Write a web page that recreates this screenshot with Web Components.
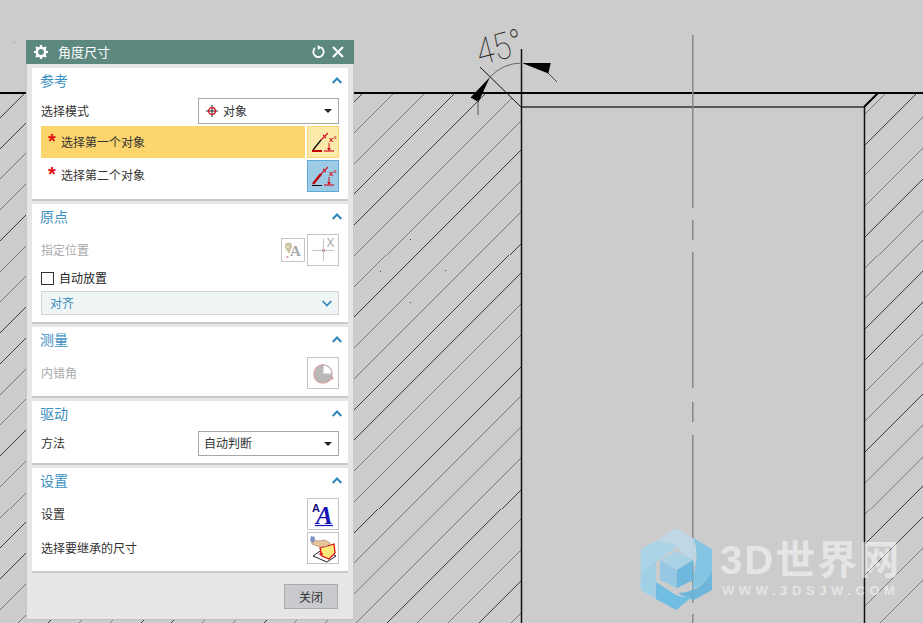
<!DOCTYPE html>
<html>
<head>
<meta charset="utf-8">
<style>
  html, body { margin: 0; height: 100%; background: #cccccc; overflow: hidden; }
  body { font-family: "Noto Sans CJK SC", "Liberation Sans", sans-serif; font-size: 12px; color: #333; }
</style>
</head>
<body>
<cad-drawing></cad-drawing>
<site-watermark></site-watermark>
<ug-dialog heading="角度尺寸">
  <ug-panel heading="参考">
    <ug-row label="选择模式"><ug-select><svg slot="icon" width="12" height="12" viewBox="0 0 12 12"><path d="M6 0v12M0 6h12" stroke="#222" stroke-width="1"/><circle cx="6" cy="6" r="3.4" fill="none" stroke="#d01020" stroke-width="1.3"/></svg>对象</ug-select></ug-row>
    <ug-row label="选择第一个对象" required state="active"><ug-tool state="active"><svg width="30" height="30" viewBox="0 0 30 30"><path d="M5 23L13 13" stroke="#111" stroke-width="1.4"/><path d="M4 24h10" stroke="#c00000" stroke-width="2"/><path d="M13 13l7-7M15 8l3 3" stroke="#d01020" stroke-width="1.1" fill="none"/><path d="M21 16v7" stroke="#d01020"/><path d="M19 21h4l-2 3z" fill="#d01020"/><path d="M16 24h10" stroke="#d01020" stroke-width="1.2"/><text x="21" y="15" font-size="8" font-weight="700" fill="#d01020" font-family="Liberation Sans">x°</text></svg></ug-tool></ug-row>
    <ug-row label="选择第二个对象" required><ug-tool state="focus"><svg width="30" height="30" viewBox="0 0 30 30"><path d="M5 23L13 13" stroke="#c00000" stroke-width="2.4"/><path d="M4 24.500h10" stroke="#111" stroke-width="1"/><path d="M13 13l7-7M15 8l3 3" stroke="#d01020" stroke-width="1.1" fill="none"/><path d="M21 16v7" stroke="#d01020"/><path d="M19 21h4l-2 3z" fill="#d01020"/><path d="M16 24h10" stroke="#d01020" stroke-width="1.2"/><text x="21" y="15" font-size="8" font-weight="700" fill="#d01020" font-family="Liberation Sans">x°</text></svg></ug-tool></ug-row>
  </ug-panel>
  <ug-panel heading="原点">
    <ug-row label="指定位置" disabled>
      <ug-tool size="small"><svg width="22" height="22" viewBox="0 0 22 22"><circle cx="6.5" cy="7" r="3.6" fill="#c9c3a4"/><path d="M4 10l3 5 2-5z" fill="#c9c3a4"/><circle cx="6" cy="8" r="1.4" fill="#e8e4cf"/><rect x="4.5" y="17" width="2" height="2" fill="#d9a0a8"/><text x="8" y="17" font-size="15" font-weight="700" fill="#a9a9a9" font-family="Liberation Serif">A</text></svg></ug-tool>
      <ug-tool><svg width="30" height="30" viewBox="0 0 30 30"><path d="M4 15.500h22M15.500 4v22" stroke="#c4c4c4" fill="none"/><rect x="14" y="14" width="3" height="3" fill="#cfa6aa"/><rect x="17" y="2" width="12" height="11" fill="#fff"/><text x="18.500" y="12" font-size="12" fill="#a8a8a8" font-family="Liberation Sans">X</text></svg></ug-tool>
    </ug-row>
    <ug-check label="自动放置"></ug-check>
    <ug-group label="对齐"></ug-group>
  </ug-panel>
  <ug-panel heading="测量">
    <ug-row label="内错角" disabled><ug-tool><svg width="30" height="30" viewBox="0 0 30 30"><circle cx="15" cy="16" r="9" fill="#b8b8b8" stroke="#cfa9a9" stroke-width="1.6"/><path d="M15 16V7a9 9 0 0 1 9 9z" fill="#fff" stroke="#bbb"/><path d="M13 6l3 1-3 2zM23 22l1-4 2 3z" fill="#cfa0a0"/></svg></ug-tool></ug-row>
  </ug-panel>
  <ug-panel heading="驱动">
    <ug-row label="方法"><ug-select compact>自动判断</ug-select></ug-row>
  </ug-panel>
  <ug-panel heading="设置">
    <ug-row label="设置"><ug-tool><svg width="30" height="30" viewBox="0 0 30 30"><text x="4" y="13" font-size="11" font-weight="700" fill="#1a0f80" font-family="Liberation Sans">A</text><text x="8" y="25" font-size="25" font-weight="700" font-style="italic" fill="#1414b4" font-family="Liberation Serif">A</text><path d="M7 26.500h18" stroke="#1414b4" stroke-width="1.2"/></svg></ug-tool></ug-row>
    <ug-row label="选择要继承的尺寸"><ug-tool><svg width="30" height="30" viewBox="0 0 30 30"><path d="M5 23l10-7 13 7-9 6z" fill="#fff" stroke="#222"/><path d="M12 15l14-4 1 9-6 6-7-3z" fill="#ffe97a" stroke="#d81010" stroke-width="1.300"/><path d="M3 6l7 2 7-1 5 3-3 3-7 1-8-3z" fill="#e8c39a" stroke="#9a8068" stroke-width=".6"/><path d="M3 3l4 1-1 6-4-2z" fill="#7c92c8"/><circle cx="13" cy="21" r="1.700" fill="#e02020"/></svg></ug-tool></ug-row>
  </ug-panel>
  <ug-button slot="footer">关闭</ug-button>
</ug-dialog>

<script>
class CadDrawing extends HTMLElement {
  connectedCallback() {
    const root = this.attachShadow({ mode: 'open' });
    let hatch = '';
    for (let k = -11; k < 35; k++) {
      const c = 456 + 30.75 * k;
      const m = ((k % 7) + 7) % 7;
      const black = (m === 0 || m === 3 || m === 4) && k !== 17;
      const col = black ? '#000' : '#5a5a5a';
      // left block, cut by the chamfer and the wall at x=521
      let x1 = Math.min(c - 93, 521), y1 = c - x1;
      if (x1 > 507) { x1 = (c + 413) / 2; y1 = c - x1; }
      if (c - 93 > 507 && y1 > 107 && x1 >= 521) { x1 = 521; y1 = c - 521; }
      if (x1 > 0 && c > 94) {
        hatch += `<line x1="${x1}" y1="${y1}" x2="${c - 623}" y2="623" stroke="${col}"/>`;
      }
      // right block
      if (c > 957) {
        let rx = Math.min(c - 93, 923), ry = c - rx;
        hatch += `<line x1="${rx}" y1="${ry}" x2="865" y2="${c - 865}" stroke="${col}"/>`;
      }
    }
    root.innerHTML = `
      <style>
        :host { position: absolute; inset: 0; display: block; }
        svg { display: block; }
        text { font-family: Roboto, "Liberation Sans", sans-serif; font-weight: 100; }
      </style>
      <svg width="923" height="623" viewBox="0 0 923 623">
        <g stroke-width=".7" shape-rendering="crispEdges">${hatch}</g>
        <g fill="#444">
          <rect x="410" y="239" width="1" height="1"/><rect x="380" y="271" width="1" height="1"/>
          <rect x="410" y="302" width="1" height="1"/><rect x="445" y="270" width="1" height="1"/>
          <rect x="14" y="42" width="1" height="1" fill="#888"/>
        </g>
        <line x1="0" y1="93" x2="923" y2="93" stroke="#000" stroke-width="2"/>
        <line x1="521" y1="107" x2="864" y2="107" stroke="#333" stroke-width="1.5"/>
        <line x1="521.500" y1="49" x2="521.500" y2="623" stroke="#111" stroke-width="1.500"/>
        <line x1="864.500" y1="107" x2="864.500" y2="623" stroke="#111" stroke-width="1.500"/>
        <line x1="864" y1="107" x2="878" y2="93" stroke="#000" stroke-width="2"/>
        <line x1="480" y1="67" x2="521.500" y2="107.500" stroke="#111"/>
        <path d="M692.800 35V208M692.800 220V240M692.800 252V388M692.800 402V422M692.800 435V603M692.800 614V623" stroke="#888" stroke-width="1.500" fill="none"/>
        <path d="M490 77A44 44 0 0 1 522 63" stroke="#666" fill="none"/>
        <path d="M490 77L470.500 97.500L478.500 102z" fill="#000"/>
        <path d="M478 100V115" stroke="#555"/>
        <path d="M522 63H550.700L548.300 73.500z" fill="#000"/>
        <path d="M548 73L557 82" stroke="#444"/>
        <text transform="translate(480 65.500) rotate(-15) scale(.86 1)" font-size="37" fill="#222">45°</text>
      </svg>`;
  }
}

class SiteWatermark extends HTMLElement {
  connectedCallback() {
    this.attachShadow({ mode: 'open' }).innerHTML = `
      <style>
        :host { position: absolute; left: 640px; top: 528px; display: flex; gap: 8px; pointer-events: none; }
        svg { opacity: .92; }
        .words { display: flex; flex-direction: column; padding-top: 9px; color: rgba(255,255,255,.5); font-family: "Liberation Sans", "Noto Sans CJK SC", sans-serif; font-weight: 700; }
        .big { font-size: 40px; line-height: 46px; letter-spacing: 2px; white-space: nowrap; }
        .small { font-size: 13px; line-height: 16px; letter-spacing: 4.600px; white-space: nowrap; padding-left: 2px; }
      </style>
      <svg width="72" height="83" viewBox="0 0 72 83">
        <path d="M36 0L54 10.500Q58 24 54 37L37 19Q28 13 16 13z" fill="#bfd9e8"/>
        <path d="M.7 21L16 13Q30 13 37 18.700L16 34Q6 38 .7 46z" fill="#a9d5ea"/>
        <path d="M.7 46Q6 38 16 34V54Q15 62 16 71L.7 62z" fill="#9ed0e9"/>
        <path d="M16 54L36 67Q44 70 52 69L36 82L16 71z" fill="#68bde4"/>
        <path d="M53 10L72 21V43Q68 55 52 61L56 33Q58 20 53 10z" fill="#7ec5e7"/>
        <path d="M72 43V62L52 73L50 69Q44 70 38 65Q62 64 72 43z" fill="#68b6dc"/>
        <path d="M36.700 23L53.300 32L36.700 42L20 32z" fill="#a8d3ea"/>
        <path d="M20 32L36.700 42V60.300L20 52z" fill="#92c8e5"/>
        <path d="M53.300 32L36.700 42V60.300L53.300 52z" fill="#68b7df"/>
      </svg>
      <div class="words"><div class="big">3D世界网</div><div class="small">WWW.3DSJW.COM</div></div>`;
  }
}

class UgDialog extends HTMLElement {
  connectedCallback() {
    this.attachShadow({ mode: 'open' }).innerHTML = `
      <style>
        :host { position: absolute; left: 26px; top: 40px; width: 328px; height: 580px; display: flex; flex-direction: column; background: #e6e6e6; box-shadow: inset 1px 0 #c8c8c8, inset -1px 0 #c8c8c8, inset 0 -1px #c0c0c0; box-sizing: border-box; font-family: "Noto Sans CJK SC", "Liberation Sans", sans-serif; }
        .bar { height: 24px; background: #5c8880; color: #fff; display: flex; align-items: center; padding: 0 7px; font-size: 13px; gap: 9px; }
        .bar span { flex: 1; padding-bottom: 2px; }
        .body { padding: 0 6px; display: flex; flex-direction: column; gap: 3px; margin-top: 4px; }
        .foot { display: flex; justify-content: flex-end; padding: 11px 16px 0 0; }
      </style>
      <div class="bar">
        <svg width="16" height="16" viewBox="0 0 16 16"><circle cx="8" cy="8" r="4.200" fill="none" stroke="#fff" stroke-width="2.600"/><path d="M8 1v3M8 12v3M1 8h3M12 8h3M3 3l2.200 2.200M10.800 10.800L13 13M13 3l-2.200 2.200M5.200 10.800L3 13" stroke="#fff" stroke-width="2.200"/></svg>
        <span>${this.getAttribute('heading')}</span>
        <svg width="14" height="14" viewBox="0 0 14 14"><path d="M9 2.300A5.200 5.200 0 1 1 3 3" fill="none" stroke="#fff" stroke-width="1.800"/><path d="M5.500 0L9.500 2.500L6 5z" fill="#fff"/></svg>
        <svg width="14" height="14" viewBox="0 0 14 14" style="margin-left:-4px;margin-right:2px"><path d="M2 2l10 10M12 2L2 12" stroke="#fff" stroke-width="2.200"/></svg>
      </div>
      <div class="body"><slot></slot></div>
      <div class="foot"><slot name="footer"></slot></div>`;
  }
}

class UgPanel extends HTMLElement {
  connectedCallback() {
    this.attachShadow({ mode: 'open' }).innerHTML = `
      <style>
        :host { display: block; background: #fff; border-bottom: 2px solid #c9c9c9; padding-bottom: 7px; }
        .head { height: 30px; box-sizing: border-box; padding: 3px 6px 0 8px; display: flex; justify-content: space-between; align-items: flex-start; color: #3a8fc0; font-size: 14px; line-height: 18px; }
        .rows { padding: 0 9px; display: flex; flex-direction: column; gap: 2px; }
        svg { margin-top: 6px; }
      </style>
      <div class="head"><span>${this.getAttribute('heading')}</span>
        <svg width="10" height="7" viewBox="0 0 10 7"><path d="M.7 6L5 1.500L9.300 6" fill="none" stroke="#2b85b8" stroke-width="1.900"/></svg></div>
      <div class="rows"><slot></slot></div>`;
  }
}

class UgRow extends HTMLElement {
  connectedCallback() {
    const star = this.hasAttribute('required') ? '<b>*</b>' : '';
    this.attachShadow({ mode: 'open' }).innerHTML = `
      <style>
        :host { display: flex; align-items: center; gap: 2px; color: #333; font-size: 12px; }
        :host([disabled]) { color: #aaa; }
        .label { flex: 1; display: flex; align-items: center; align-self: stretch; white-space: nowrap; padding-bottom: 2px; box-sizing: border-box; }
        :host([state="active"]) .label { background: #fcd56d; }
        :host([required]) .label { padding-left: 7px; }
        :host([required]:not([state])) .label { padding-bottom: 4px; }
        b { color: #e01010; font: 700 20px/20px "Liberation Sans", sans-serif; width: 13px; height: 20px; }
      </style>
      <div class="label">${star}<span>${this.getAttribute('label')}</span></div>
      <slot></slot>`;
  }
}

class UgSelect extends HTMLElement {
  connectedCallback() {
    this.attachShadow({ mode: 'open' }).innerHTML = `
      <style>
        :host { width: 141px; height: 26px; box-sizing: border-box; border: 1px solid #a8a8a8; background: #fff; display: flex; align-items: center; padding: 0 5px; font-size: 12px; color: #333; }
        :host([compact]) { height: 25px; }
        ::slotted(svg) { margin: 0 5px 0 2px; }
        .text { flex: 1; display: flex; align-items: center; white-space: nowrap; padding-bottom: 2px; }
        i { width: 0; height: 0; border: 4px solid transparent; border-top: 4px solid #222; border-bottom: 0; margin-right: 1px; }
      </style>
      <slot name="icon"></slot><div class="text"><slot></slot></div><i></i>`;
  }
}

class UgTool extends HTMLElement {
  connectedCallback() {
    this.attachShadow({ mode: 'open' }).innerHTML = `
      <style>
        :host { width: 32px; height: 32px; box-sizing: border-box; border: 1px solid #c4c4c4; background: #fff; display: flex; align-items: center; justify-content: center; flex: none; }
        :host([size="small"]) { width: 24px; height: 24px; }
        :host([state="active"]) { background: #fbeaaa; border-color: #fcd56d; }
        :host([state="focus"]) { background: #9dcbe6; border-color: #5aa9d8; }
      </style>
      <slot></slot>`;
  }
}

class UgCheck extends HTMLElement {
  connectedCallback() {
    this.attachShadow({ mode: 'open' }).innerHTML = `
      <style>
        :host { display: flex; align-items: center; gap: 5px; height: 21px; color: #222; font-size: 12px; }
        i { width: 13px; height: 13px; box-sizing: border-box; border: 1px solid #333; background: #fff; }
        span { padding-bottom: 2px; }
      </style>
      <i></i><span>${this.getAttribute('label')}</span>`;
  }
}

class UgGroup extends HTMLElement {
  connectedCallback() {
    this.attachShadow({ mode: 'open' }).innerHTML = `
      <style>
        :host { height: 24px; box-sizing: border-box; border: 1px solid #d5d5d5; background: #eff5f5; color: #3a8fc0; display: flex; align-items: center; justify-content: space-between; padding: 0 6px 0 8px; font-size: 12px; }
        span { padding-bottom: 2px; }
      </style>
      <span>${this.getAttribute('label')}</span>
      <svg width="10" height="7" viewBox="0 0 10 7"><path d="M.7 1L5 5.500L9.300 1" fill="none" stroke="#2b85b8" stroke-width="1.700"/></svg>`;
  }
}

class UgButton extends HTMLElement {
  connectedCallback() {
    this.attachShadow({ mode: 'open' }).innerHTML = `
      <style>
        :host { width: 54px; height: 25px; box-sizing: border-box; border: 1px solid #aaa; background: #c8cacd; display: flex; align-items: center; justify-content: center; font-size: 12px; color: #333; padding-bottom: 1px; }
      </style>
      <slot></slot>`;
  }
}

customElements.define('cad-drawing', CadDrawing);
customElements.define('site-watermark', SiteWatermark);
customElements.define('ug-dialog', UgDialog);
customElements.define('ug-panel', UgPanel);
customElements.define('ug-row', UgRow);
customElements.define('ug-select', UgSelect);
customElements.define('ug-tool', UgTool);
customElements.define('ug-check', UgCheck);
customElements.define('ug-group', UgGroup);
customElements.define('ug-button', UgButton);
</script>
</body>
</html>
